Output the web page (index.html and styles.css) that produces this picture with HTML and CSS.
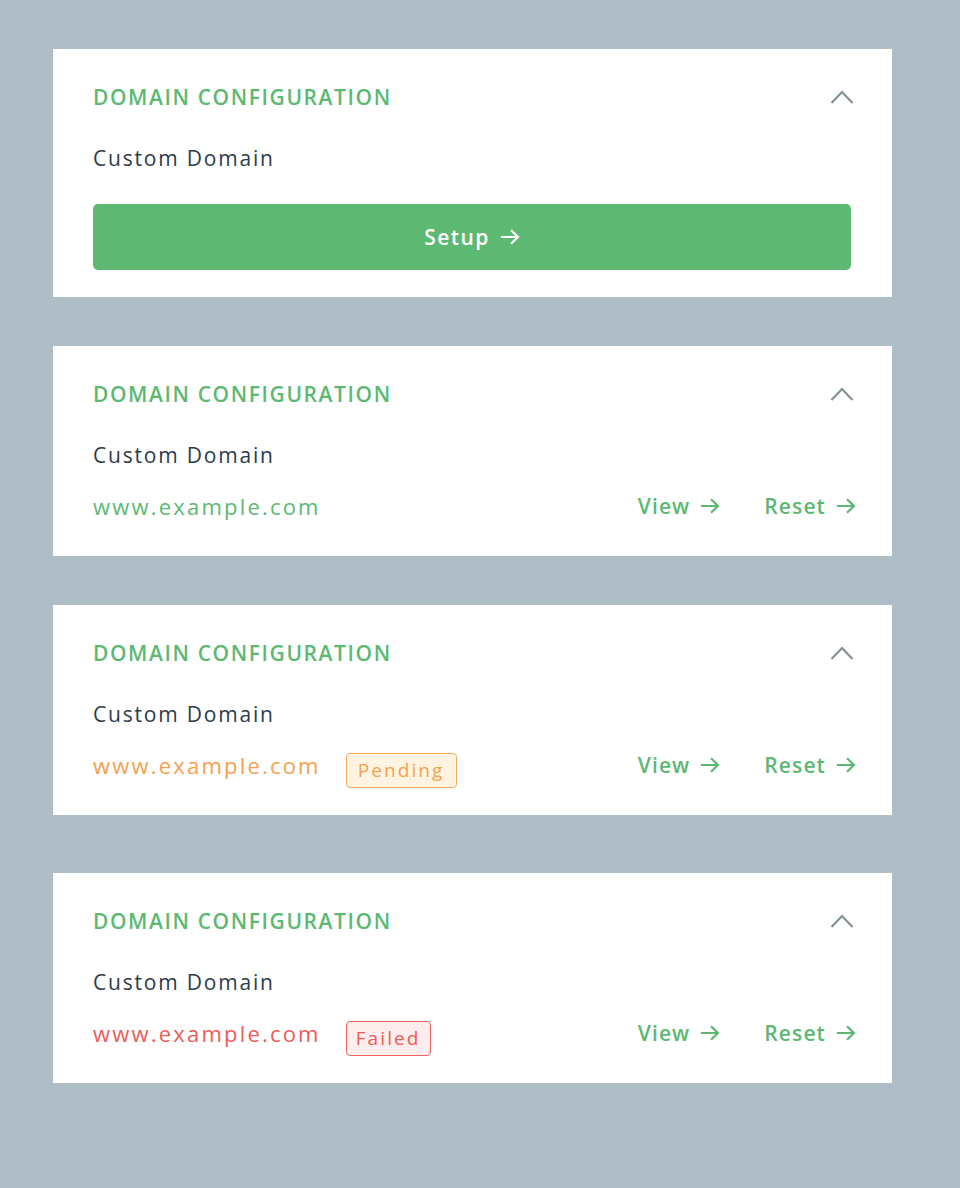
FILE: index.html
```html
<!DOCTYPE html>
<html lang="en">
<head>
<meta charset="utf-8">
<title>Domain Configuration</title>
<link rel="stylesheet" href="styles.css">
</head>
<body>
<main class="page">
  <section class="card card--setup">
    <header class="card-head">
      <h2 class="card-title">DOMAIN CONFIGURATION</h2>
      <svg class="chevron" width="24" height="14" viewBox="0 0 24 14" aria-hidden="true"><polyline points="1.5,13 12,2 22.5,13" fill="none" stroke="#84919a" stroke-width="2.2"/></svg>
    </header>
    <p class="label">Custom Domain</p>
    <button class="setup-btn" type="button">Setup
      <svg class="arrow" width="20" height="16" viewBox="0 0 20 16" aria-hidden="true"><path d="M1 8H18M11 1.2L18 8L11 14.8" fill="none" stroke="currentColor" stroke-width="2.2"/></svg>
    </button>
  </section>

  <section class="card">
    <header class="card-head">
      <h2 class="card-title">DOMAIN CONFIGURATION</h2>
      <svg class="chevron" width="24" height="14" viewBox="0 0 24 14" aria-hidden="true"><polyline points="1.5,13 12,2 22.5,13" fill="none" stroke="#84919a" stroke-width="2.2"/></svg>
    </header>
    <p class="label">Custom Domain</p>
    <div class="domain-row">
      <span class="domain domain--ok">www.example.com</span>
      <nav class="actions">
        <a class="action">View <svg class="arrow" width="20" height="16" viewBox="0 0 20 16" aria-hidden="true"><path d="M1 8H18M11 1.2L18 8L11 14.8" fill="none" stroke="currentColor" stroke-width="2.2"/></svg></a>
        <a class="action">Reset <svg class="arrow" width="20" height="16" viewBox="0 0 20 16" aria-hidden="true"><path d="M1 8H18M11 1.2L18 8L11 14.8" fill="none" stroke="currentColor" stroke-width="2.2"/></svg></a>
      </nav>
    </div>
  </section>

  <section class="card">
    <header class="card-head">
      <h2 class="card-title">DOMAIN CONFIGURATION</h2>
      <svg class="chevron" width="24" height="14" viewBox="0 0 24 14" aria-hidden="true"><polyline points="1.5,13 12,2 22.5,13" fill="none" stroke="#84919a" stroke-width="2.2"/></svg>
    </header>
    <p class="label">Custom Domain</p>
    <div class="domain-row">
      <span class="domain domain--pending">www.example.com</span>
      <span class="badge badge--pending">Pending</span>
      <nav class="actions">
        <a class="action">View <svg class="arrow" width="20" height="16" viewBox="0 0 20 16" aria-hidden="true"><path d="M1 8H18M11 1.2L18 8L11 14.8" fill="none" stroke="currentColor" stroke-width="2.2"/></svg></a>
        <a class="action">Reset <svg class="arrow" width="20" height="16" viewBox="0 0 20 16" aria-hidden="true"><path d="M1 8H18M11 1.2L18 8L11 14.8" fill="none" stroke="currentColor" stroke-width="2.2"/></svg></a>
      </nav>
    </div>
  </section>

  <section class="card card--spaced">
    <header class="card-head">
      <h2 class="card-title">DOMAIN CONFIGURATION</h2>
      <svg class="chevron" width="24" height="14" viewBox="0 0 24 14" aria-hidden="true"><polyline points="1.5,13 12,2 22.5,13" fill="none" stroke="#84919a" stroke-width="2.2"/></svg>
    </header>
    <p class="label">Custom Domain</p>
    <div class="domain-row">
      <span class="domain domain--failed">www.example.com</span>
      <span class="badge badge--failed">Failed</span>
      <nav class="actions">
        <a class="action">View <svg class="arrow" width="20" height="16" viewBox="0 0 20 16" aria-hidden="true"><path d="M1 8H18M11 1.2L18 8L11 14.8" fill="none" stroke="currentColor" stroke-width="2.2"/></svg></a>
        <a class="action">Reset <svg class="arrow" width="20" height="16" viewBox="0 0 20 16" aria-hidden="true"><path d="M1 8H18M11 1.2L18 8L11 14.8" fill="none" stroke="currentColor" stroke-width="2.2"/></svg></a>
      </nav>
    </div>
  </section>
</main>
</body>
</html>
```

FILE: styles.css
```css
* { box-sizing: border-box; }

html, body {
  margin: 0;
  padding: 0;
  background: #afbec6;
  font-family: "Open Sans", "Noto Sans", sans-serif;
}

.page {
  width: 892px;
  padding: 49px 0 0 53px;
  display: flex;
  flex-direction: column;
  gap: 49px;
}

.card {
  background: #ffffff;
  padding: 36px 41px 35px 40px;
  display: flex;
  flex-direction: column;
}

.card--setup {
  padding-bottom: 27px;
}

.card--spaced {
  margin-top: 9px;
}

.card-head {
  display: flex;
  align-items: center;
  justify-content: space-between;
  height: 24px;
}

.card-title {
  margin: 0;
  font-size: 21px;
  line-height: 24px;
  font-weight: 600;
  letter-spacing: 1.6px;
  color: #5cb873;
}

.chevron {
  display: block;
  margin-right: -3px;
}

.label {
  margin: 37px 0 0;
  font-size: 21px;
  line-height: 24px;
  font-weight: 400;
  letter-spacing: 1.8px;
  color: #2c3b4b;
}

.setup-btn {
  margin-top: 34px;
  height: 66px;
  width: 100%;
  border: 0;
  border-radius: 5px;
  background: #5db872;
  color: #ffffff;
  font-family: inherit;
  font-size: 21px;
  font-weight: 600;
  letter-spacing: 1.4px;
  display: flex;
  align-items: center;
  justify-content: center;
  gap: 10px;
  padding: 0;
}

.arrow {
  display: block;
  flex: none;
}

.domain-row {
  margin-top: 24px;
  height: 30px;
  display: flex;
  align-items: flex-start;
}

.domain {
  font-size: 22px;
  line-height: 30px;
  letter-spacing: 2.2px;
}

.domain--ok { color: #5cb873; }
.domain--pending { color: #f5a04e; }
.domain--failed { color: #ec5b58; }

.badge {
  margin: 3px 0 0 25px;
  height: 35px;
  padding: 0 11px;
  border-radius: 4px;
  border: 1.5px solid;
  font-size: 19px;
  line-height: 35px;
  letter-spacing: 2.1px;
  display: flex;
  align-items: center;
}

.badge--pending {
  color: #f5a04e;
  border-color: #f5aa62;
  background: #fff4e1;
}

.badge--failed {
  color: #ec5b58;
  border-color: #ea6563;
  background: #fdeded;
  padding: 0 9px;
}

.actions {
  margin-left: auto;
  margin-right: -5px;
  display: flex;
  gap: 44px;
}

.action {
  display: flex;
  align-items: center;
  gap: 10px;
  font-size: 21px;
  line-height: 30px;
  font-weight: 600;
  letter-spacing: 1.1px;
  color: #5cb873;
  cursor: pointer;
}
```
